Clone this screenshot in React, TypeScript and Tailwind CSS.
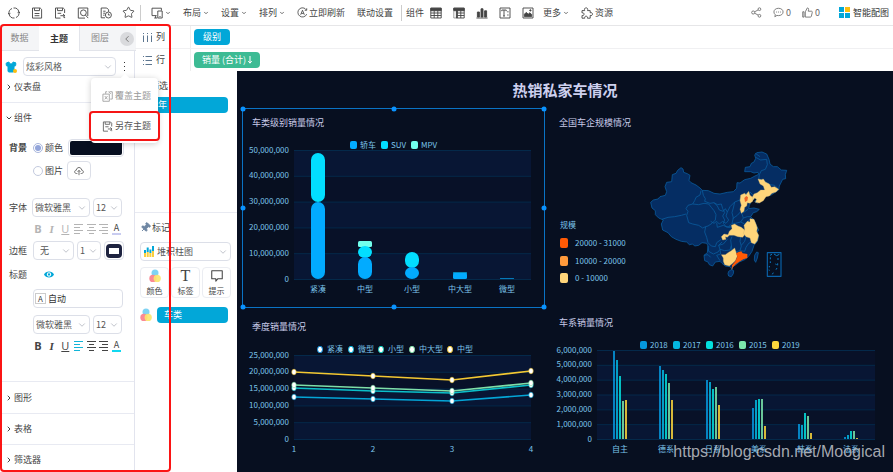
import React from 'react';
import { ChevronDown, ChevronLeft, ChevronRight, Pin, Shirt, Star } from 'lucide-react';

/* ---------- Icons ---------- */

interface IconProps {
  className?: string;
  children: React.ReactNode;
}

const Icon: React.FC<IconProps> = ({ className = 'size-3', children }) => (
  <svg
    viewBox="0 0 12 12"
    className={`shrink-0 ${className}`}
    fill="none"
    stroke="currentColor"
    strokeWidth="0.9"
    strokeLinejoin="round"
    aria-hidden="true"
  >
    {children}
  </svg>
);

const RefreshIcon = () => (
  <Icon>
    <path d="M1.1 7.200A5 5 0 0 1 4 1.500M5.500 1A5 5 0 0 1 10.900 4.800M10.900 5A5 5 0 0 1 8 10.500M6.500 11A5 5 0 0 1 1.100 7.200" />
    <path d="M.2 6l.9 1.300 1.300-.9M11.800 6l-.9-1.300-1.300.9" />
  </Icon>
);

const SaveIcon = () => (
  <Icon>
    <path d="M1.5 1h7.7L10.6 2.4V11.1H1.5z" />
    <path d="M3.5 1.2v2.4h5V1.2M3.6 6.5h4.8M3.6 8.7h4.8" />
  </Icon>
);

const SaveAsIcon = ({ className }: { className?: string }) => (
  <Icon className={className}>
    <path d="M6.500 11.100H1.500V1h7.700l1.400 1.400V6" />
    <path d="M3.500 1.200v2.400h5V1.200M3.600 6.300h3.600M6.400 8.700h4.400M9 7l1.900 1.700L9 10.400M10.600 10v1.100" />
  </Icon>
);

const PreviewIcon = () => (
  <Icon>
    <path d="M8 11.100H1.300V1h9.500v8" />
    <circle cx="6.400" cy="5.800" r="2.900" />
    <path d="M8.400 8l2.800 3.100" />
  </Icon>
);

const ScheduleIcon = () => (
  <Icon>
    <path d="M5 10.800H1.200V1h5.600l1.800 1.800v2M3.200 4.200h2.400M3.200 6.200h2M3.200 8.200h1.400" />
    <circle cx="8.400" cy="8" r="3" />
    <path d="M8.400 6.400V8h1.500" />
  </Icon>
);

const DeviceIcon = () => (
  <Icon>
    <path d="M5.600 8.600H1V1.200h9.400v2.400M3.200 11h3M4.600 8.800V11" />
    <path d="M6.800 4h4.400v7H6.800zM8.400 9.600h1.200" />
  </Icon>
);

const AutoRefreshIcon = () => (
  <Icon className="size-[11px]">
    <path d="M10.600 7.800A5 5 0 1 1 10.200 3.200M10.600 1.400v2.200H8.400" />
    <path d="M4 8.500L6 3.500l2 5M4.700 7h2.600" />
  </Icon>
);

const TableIcon = () => (
  <Icon>
    <path d="M.8 1.200h10.400v9.800H.8zM.8 6h10.400M.8 8.500h10.400M4.200 3.400V11M7.800 3.400V11" />
    <path d="M.8 1.200h10.400v2.500H.8z" fill="currentColor" />
  </Icon>
);

const PivotIcon = () => (
  <Icon>
    <path d="M.8 3.500V1.200h10.400v9.800H4.200M4.200 6h7M4.200 8.500h7M7.800 3.400V11" />
    <path d="M.8 1.200h10.400v2.500H.8zM3.400 3.500h1V11h-1z" fill="currentColor" />
    <path d="M.8 4v7h3" strokeWidth="0.500" />
  </Icon>
);

const BarsIcon = () => (
  <Icon>
    <path d="M1.400 5h2v5h-2zM5 1.800h2v8.200H5zM8.600 3.800h2V10h-2z" fill="currentColor" />
    <path d="M.4 11h11.200" />
  </Icon>
);

const TextIcon = () => (
  <Icon>
    <path d="M1 1h10v10H1zM2.800 4.200V3h4.400v1.200M5 3v6M4 9h2M8.200 4.800h1.400M8.200 8h1.400" />
  </Icon>
);

const ImageIcon = () => (
  <Icon>
    <path d="M1 1h10v10H1z" />
    <path d="M2.400 9.600V7.200l1.800-1.800 2 1.800 1.600-1.400 1.800 1.600v2.200z" fill="currentColor" />
    <circle cx="8.400" cy="3.400" r=".7" fill="currentColor" />
  </Icon>
);

const PuzzleIcon = () => (
  <Icon>
    <path d="M1 3.600h2.700C3 2 3.900.8 5.100.8S7.200 2 6.500 3.600h2.700v2.200c1.300-.6 2.300.2 2.300 1.300S10.500 9 9.200 8.400v2.800H6.400c.4-1.300-.3-2-1.300-2s-1.700.7-1.300 2H1V8.500c1.300.4 2-.3 2-1.300S2.300 5.500 1 5.900z" />
  </Icon>
);

const ShareIcon = () => (
  <Icon className="size-[11px]">
    <circle cx="2.400" cy="6" r="1.700" />
    <circle cx="9.200" cy="2.400" r="1.500" />
    <circle cx="9.200" cy="9.600" r="1.500" />
    <path d="M4 5.200l3.800-2M4 6.800l3.800 2" />
  </Icon>
);

const CommentIcon = () => (
  <Icon className="size-[11px]">
    <path d="M6 1.400c2.900 0 5 1.700 5 4s-2.100 4-5 4c-.6 0-1.200 0-1.700-.2L2 10.600l.5-2.200C1.500 7.600 1 6.600 1 5.400c0-2.300 2.100-4 5-4z" />
    <path d="M3.400 5.500h1M5.500 5.500h1M7.600 5.500h1" />
  </Icon>
);

const LikeIcon = () => (
  <Icon className="size-[11px]">
    <path d="M3.600 5.200L5.800 1c1.200 0 1.600.8 1.400 1.800L6.800 4.600h3.600c.7 0 .9.600.8 1.200l-1 4.400c-.1.500-.5.800-1 .8H3.600zM.8 5.200h1.400V11H.8z" />
  </Icon>
);

const ColorDots = ({ className }: { className: string }) => (
  <svg viewBox="0 0 12 14" className={`shrink-0 ${className}`} aria-hidden="true">
    <circle cx="6" cy="4" r="3.500" fill="#7fd3f3" />
    <circle cx="3.900" cy="9.400" r="3.600" fill="#fb8a94" />
    <circle cx="8.200" cy="9.400" r="3.600" fill="#fbe66c" fillOpacity="0.9" />
  </svg>
);

const ListIcon = ({ vertical = false }: { vertical?: boolean }) => (
  <svg viewBox="0 0 9 9" className="size-[9px] shrink-0" stroke="#5d7690" aria-hidden="true">
    {vertical ? (
      <path d="M.5 0v1M.5 2.500V9M4.500 0v1M4.500 2.500V9M8.500 0v1M8.500 2.500V9" />
    ) : (
      <path d="M0 .5h1M2.500 .5H9M0 4.500h1M2.500 4.500H9M0 8.500h1M2.500 8.500H9" />
    )}
  </svg>
);

const AlignIcon = ({ kind }: { kind: 'left' | 'center' | 'right' }) => (
  <svg viewBox="0 0 9 10" className="h-2.5 w-[9px]" stroke="currentColor" aria-hidden="true">
    {kind === 'left' && <path d="M0 .5h9M0 3.500h6M0 6.500h9M0 9.500h6" />}
    {kind === 'center' && <path d="M0 .5h9M2 3.500h5M0 6.500h9M2 9.500h5" />}
    {kind === 'right' && <path d="M0 .5h9M3 3.500h6M0 6.500h9M3 9.500h6" />}
  </svg>
);

/* ---------- Toolbar ---------- */

const FILE_ACTIONS = [
  { label: 'Refresh', icon: <RefreshIcon /> },
  { label: 'Save', icon: <SaveIcon /> },
  { label: 'Save as', icon: <SaveAsIcon /> },
  { label: 'Preview', icon: <PreviewIcon /> },
  { label: 'Schedule', icon: <ScheduleIcon /> },
  { label: 'Favorite', icon: <Star className="size-[13px]" strokeWidth={1.6} /> },
];

const COMPONENT_ACTIONS = [
  { label: 'Table', icon: <TableIcon /> },
  { label: 'Pivot table', icon: <PivotIcon /> },
  { label: 'Chart', icon: <BarsIcon /> },
  { label: 'Text', icon: <TextIcon /> },
  { label: 'Image', icon: <ImageIcon /> },
];

const MenuButton = ({ children }: { children: React.ReactNode }) => (
  <button className="flex items-center gap-0.5">
    {children}
    <ChevronDown className="size-1.5" strokeWidth={3} />
  </button>
);

const IconButton = ({ label, icon }: { label: string; icon: React.ReactNode }) => (
  <button aria-label={label} className="flex w-[23px] shrink-0 justify-center">
    {icon}
  </button>
);

const Toolbar = () => (
  <header className="flex h-[26px] items-center border-b border-[#e6e6e8] pr-1 pl-0.5 whitespace-nowrap text-[#444]">
    {FILE_ACTIONS.map((a) => (
      <IconButton key={a.label} {...a} />
    ))}
    <span className="h-4 w-px bg-[#ccc]" />
    <nav className="mx-2 flex items-center gap-3 pl-0.5">
      <MenuButton>
        <DeviceIcon />
      </MenuButton>
      <MenuButton>布局</MenuButton>
      <MenuButton>设置</MenuButton>
      <MenuButton>排列</MenuButton>
      <button className="flex items-center gap-px">
        <AutoRefreshIcon />
        立即刷新
      </button>
      <button>联动设置</button>
    </nav>
    <span className="h-4 w-px bg-[#ccc]" />
    <span className="ml-1">组件</span>
    {COMPONENT_ACTIONS.map((a) => (
      <IconButton key={a.label} {...a} />
    ))}
    <div className="ml-1 flex items-center gap-3">
      <MenuButton>更多</MenuButton>
      <button className="flex items-center gap-0.5">
        <PuzzleIcon />
        资源
      </button>
    </div>
    <div className="ml-auto flex items-center gap-[11px] text-[#666]">
      <button aria-label="Share">
        <ShareIcon />
      </button>
      <button className="flex items-center gap-0.5">
        <CommentIcon />0
      </button>
      <button className="flex items-center gap-0.5">
        <LikeIcon />0
      </button>
      <button className="ml-2 flex items-center gap-[3px] text-[#333]">
        <span className="grid size-[11px] grid-cols-2 gap-px">
          <i className="bg-[#02a7d8]" />
          <i className="bg-[#fcbf10]" />
          <i className="bg-[#02a7d8]" />
          <i className="bg-[#02a7d8]" />
        </span>
        智能配图
      </button>
    </div>
  </header>
);

/* ---------- Sidebar ---------- */

interface SelectProps {
  label: string;
  value: string;
  className: string;
  pad?: string;
}

const Select: React.FC<SelectProps> = ({ label, value, className, pad = 'pl-1' }) => (
  <div className={`relative h-[19px] rounded-sm border border-[#dcdfe8] bg-white ${className}`}>
    <select aria-label={label} className={`block h-full w-full appearance-none text-[#555] ${pad}`}>
      <option>{value}</option>
    </select>
    <ChevronDown className="pointer-events-none absolute top-1 right-0.5 size-2.5 text-[#b5b8c0]" />
  </div>
);

const FormatBar = ({ disabled = false }: { disabled?: boolean }) => (
  <div
    className={`ml-[33px] flex h-6 w-[88px] items-center justify-between text-[11px] ${
      disabled ? 'text-[#b4b4b4]' : 'text-[#444]'
    }`}
  >
    <button className="w-2.5 font-['Open_Sans',sans-serif] font-bold">B</button>
    <button className="w-2.5 font-['Liberation_Serif',serif] font-bold italic">I</button>
    <button className="w-2.5 font-['Open_Sans',sans-serif] underline">U</button>
    <button aria-label="Align left" className={disabled ? '' : 'text-[#12b5d8]'}>
      <AlignIcon kind="left" />
    </button>
    <button aria-label="Align center">
      <AlignIcon kind="center" />
    </button>
    <button aria-label="Align right">
      <AlignIcon kind="right" />
    </button>
    <button
      className={`h-3 w-[9px] border-b-2 text-[9px] leading-[10px] text-[#444] ${
        disabled ? 'border-[#c9ccf0]' : 'border-[#12d8f0]'
      }`}
    >
      A
    </button>
  </div>
);

const Collapsed = ({ title, className }: { title: string; className: string }) => (
  <button className={`flex w-full items-center gap-px pl-[5px] ${className}`}>
    <ChevronRight className="size-2" strokeWidth={3} />
    {title}
  </button>
);

const ThemeMenu = () => (
  <div className="absolute top-[21px] left-[91px] z-20 w-[67px] rounded-sm bg-white pt-[3px] pb-0.5 shadow-[0_1px_6px_rgba(0,0,0,0.2)]">
    <span className="absolute -top-[3px] left-[31px] size-1.5 rotate-45 bg-white" />
    <button className="flex h-[30px] w-full items-center gap-0.5 pl-[11px] text-[#999]">
      <Icon className="size-[11px]">
        <path d="M4 3V.8h1.600M8 .8h3.200v8H9M1 3.400h7v7.800H1zM3 5.500l3 3.600M6 5.500L3 9.100M9.600 3L7 .8" />
      </Icon>
      覆盖主题
    </button>
    <button className="relative flex h-[30px] w-full items-center gap-0.5 pl-[11px] text-[#555]">
      <span className="absolute inset-y-0 -right-0.5 -left-0.5 rounded-sm border-2 border-[#f51515]" />
      <SaveAsIcon className="size-[11px]" />
      另存主题
    </button>
  </div>
);

const Sidebar = () => (
  <aside className="w-[135px] shrink-0 border-r border-[#e2e4ee] text-[#444]">
    <div className="flex h-[25px] text-[#888]">
      <button className="w-[39px] border-b border-[#e2e4ea] bg-[#f4f5f7]">数据</button>
      <button className="w-10 font-bold text-[#333]">主题</button>
      <button className="flex-1 border-b border-l border-[#e2e4ea] bg-[#f4f5f7] pr-4">图层</button>
      <button
        aria-label="Collapse"
        className="-ml-4 flex size-[14px] items-center justify-center self-center rounded-full bg-[#d9dadd] text-[#666]"
      >
        <ChevronLeft className="size-2.5" />
      </button>
    </div>

    <div className="relative mt-1.5 flex items-center">
      <div className="relative ml-[5px] w-[18px]">
        <Shirt className="size-3 fill-[#02a7d8] text-[#02a7d8]" />
        <span className="absolute right-1.5 bottom-0 size-1 rounded-full bg-[#fcbf10]" />
      </div>
      <Select label="主题" value="炫彩风格" className="w-[93px]" pad="pl-0.5" />
      <button aria-label="More" className="ml-2 flex flex-col gap-[3px]">
        <i className="size-px bg-[#333]" />
        <i className="size-px bg-[#333]" />
        <i className="size-px bg-[#333]" />
      </button>
      <ThemeMenu />
    </div>

    <Collapsed title="仪表盘" className="h-[27px] border-b border-[#e8eaf2] pb-1" />
    <button className="flex h-[30px] items-center gap-px pl-[5px]">
      <ChevronDown className="size-2" strokeWidth={3} />
      组件
    </button>

    <div className="border-b border-[#e8eaf2] pt-1.5 pb-[23px]">
      <div className="flex h-[18px] items-center pl-[9px]">
        <span className="w-6 font-bold">背景</span>
        <label className="flex w-[35px] items-center gap-0.5">
          <input
            type="radio"
            name="background"
            defaultChecked
            className="size-2.5 appearance-none rounded-full border border-[#a9b6dc] bg-white p-px checked:bg-[#93a5da] checked:bg-clip-content"
          />
          颜色
        </label>
        <button
          aria-label="背景颜色"
          className="h-[18px] w-14 rounded-sm border border-[#dcdfe8] bg-[#070f20] bg-clip-content p-px"
        />
      </div>
      <div className="mt-1 flex h-[19px] items-center pl-[33px]">
        <label className="flex w-[34px] items-center gap-0.5">
          <input
            type="radio"
            name="background"
            className="size-2.5 appearance-none rounded-full border border-[#c3cade] bg-white"
          />
          图片
        </label>
        <button
          aria-label="上传图片"
          className="flex h-[19px] w-6 items-center justify-center rounded-sm border border-[#dcdfe8]"
        >
          <Icon className="size-2.5">
            <path d="M4 9H3C1.500 9 .8 8 .8 7c0-1.200.9-2 2-2 .2-2 1.500-3.200 3.200-3.200S9 3 9.200 5c1.200 0 2 .9 2 2s-.8 2-2.200 2H8M6 11V5.500M4.300 7L6 5.200 7.700 7" />
          </Icon>
        </button>
      </div>

      <div className="mt-[18px] flex items-center pl-[9px]">
        <span className="w-[23px]">字体</span>
        <Select label="字体" value="微软雅黑" className="w-[58px]" pad="pl-0.5" />
        <Select label="字号" value="12" className="ml-[3px] w-[29px]" pad="pl-0.5" />
      </div>
      <FormatBar disabled />

      <div className="flex items-center pl-[9px]">
        <span className="w-6">边框</span>
        <Select label="边框" value="无" className="w-[41px]" pad="pl-1.5" />
        <Select label="边框宽度" value="1" className="ml-[3px] w-6" pad="pl-0.5" />
        <button
          aria-label="边框颜色"
          className="ml-[3px] flex h-[19px] w-5 items-center justify-center rounded-sm border border-[#dcdfe8]"
        >
          <span className="h-3.5 w-4 rounded-sm border-4 border-x-[3px] border-[#1e2340] bg-white" />
        </button>
      </div>

      <div className="flex h-[29px] items-center pl-[9px]">
        <span className="w-[35px]">标题</span>
        <button aria-label="显示标题">
          <svg viewBox="0 0 12 8" className="h-[7px] w-2.5" aria-hidden="true">
            <path d="M0 4C2-.8 10-.8 12 4 10 8.800 2 8.800 0 4z" fill="#02a7d8" />
            <circle cx="6" cy="4" r="2.600" fill="#fff" />
            <circle cx="6" cy="4" r="1.400" fill="#02a7d8" />
          </svg>
        </button>
      </div>

      <label className="ml-[33px] flex h-[19px] w-[90px] items-center gap-0.5 rounded-sm border border-[#dcdfe8] pl-px">
        <span className="flex size-[11px] items-center justify-center border border-[#ccc] text-[8px]">A</span>
        <input aria-label="标题" defaultValue="自动" className="w-[70px] min-w-0 text-[#333] outline-none" />
      </label>

      <div className="mt-[7px] flex pl-[33px]">
        <Select label="标题字体" value="微软雅黑" className="w-[57px]" pad="pl-0.5" />
        <Select label="标题字号" value="12" className="ml-[3px] w-[29px]" pad="pl-0.5" />
      </div>
      <FormatBar />
    </div>

    <Collapsed title="图形" className="h-8 border-b border-[#e8eaf2]" />
    <Collapsed title="表格" className="h-[31px] border-b border-[#e8eaf2]" />
    <Collapsed title="筛选器" className="h-[26px] pt-1" />
  </aside>
);

/* ---------- Shelves and marks ---------- */

const Shelves = () => (
  <div className="text-[#444]">
    <div className="flex h-[23px] items-center gap-1 border-b border-[#f0f0f2] pl-2">
      <ListIcon vertical />
      <span className="w-[34px]">列</span>
      <span className="-ml-1 flex h-full items-center border-l border-[#eee] pl-[3px]">
        <button className="h-4 w-9 rounded-sm bg-[#02a7d8] text-white">级别</button>
      </span>
    </div>
    <div className="flex h-[22px] items-center gap-1 pl-2">
      <ListIcon />
      <span className="w-[34px]">行</span>
      <span className="-ml-1 flex h-full items-center border-l border-[#eee] pl-[3px]">
        <button className="flex h-4 w-[66px] items-center justify-center gap-0.5 rounded-sm bg-[#3dbb94] text-white">
          销量 (合计)
          <svg viewBox="0 0 4 8" className="h-2 w-1" fill="none" stroke="currentColor" aria-hidden="true">
            <path d="M2 0v7M.3 5L2 7.200 3.700 5" />
          </svg>
        </button>
      </span>
    </div>
  </div>
);

const MARK_BUTTONS = [
  { label: '颜色', icon: <ColorDots className="h-3.5 w-3" /> },
  {
    label: '标签',
    icon: <span className="font-['Liberation_Serif',serif] text-base leading-[14px] text-[#444]">T</span>,
  },
  {
    label: '提示',
    icon: (
      <Icon className="size-3.5">
        <path d="M1.500 1.500h9v6.800H6.800L5 10.400V8.300H1.500z" />
      </Icon>
    ),
  },
];

const MarksPanel = () => (
  <div className="w-[102px] shrink-0 text-[#444]">
    <section className="h-[142px] border-b border-[#e8eaf2]">
      <h3 className="flex h-[26px] items-center pt-1 pl-[15px]">筛选</h3>
      <button className="ml-[5px] h-4 w-[88px] rounded-sm bg-[#02a7d8] pl-[18px] text-left text-white">年</button>
    </section>
    <section className="pl-[5px]">
      <h3 className="flex h-[29px] items-center gap-px">
        <Pin className="size-[11px] rotate-45 fill-[#6f87a3] text-[#6f87a3]" />
        标记
      </h3>
      <div className="relative w-[91px]">
        <Select label="标记类型" value="堆积柱图" className="w-[91px]" pad="pl-4" />
        <svg viewBox="0 0 10 11" className="pointer-events-none absolute top-1 left-1 h-[11px] w-2.5" aria-hidden="true">
          <path d="M0 7h2v4H0zM2.700 6h2v5h-2zM5.400 7h2v4h-2zM8 5h2v6H8z" fill="#f9cf3e" />
          <path d="M0 4h2v3H0zM2.700 1.500h2V6h-2zM5.400 3.500h2V7h-2zM8 0h2v5H8z" fill="#02a7d8" />
        </svg>
      </div>
      <div className="mt-1.5 flex gap-0.5">
        {MARK_BUTTONS.map((b) => (
          <button
            key={b.label}
            className="flex h-[31px] w-[29px] flex-col items-center justify-center gap-[3px] rounded-sm border border-[#ebedf2] text-[8px] leading-[10px]"
          >
            {b.icon}
            {b.label}
          </button>
        ))}
      </div>
      <div className="mt-[9px] flex items-center gap-[5px]">
        <ColorDots className="h-3.5 w-3" />
        <button className="h-4 w-[71px] rounded-sm bg-[#02a7d8] pl-[7px] text-left text-white">车类</button>
      </div>
    </section>
  </div>
);

/* ---------- Charts ---------- */

const AXIS = '#7cc4ea';
const GRID = '#04294a';

interface GridProps {
  x1: number;
  x2: number;
  top: number;
  bottom: number;
  labels: string[];
  firstBand?: number;
}

// Horizontal split lines with alternating bands, labels go from top to bottom
const Grid: React.FC<GridProps> = ({ x1, x2, top, bottom, labels, firstBand = 0 }) => {
  const step = (bottom - top) / (labels.length - 1);
  return (
    <g>
      {labels.slice(1).map((_, i) => (
        <rect
          key={i}
          x={x1}
          y={top + step * i}
          width={x2 - x1}
          height={step}
          fill={i % 2 === firstBand ? '#081634' : '#081128'}
        />
      ))}
      {labels.map((label, i) => (
        <g key={label}>
          <line x1={x1} x2={x2} y1={top + step * i} y2={top + step * i} stroke={GRID} />
          <text x={x1 - 5} y={top + step * i + 2} textAnchor="end" fill={AXIS}>
            {label}
          </text>
        </g>
      ))}
    </g>
  );
};

const STACKS = [
  { name: '紧凑', x: 318, parts: [[153, 202, '#02deff'], [202, 279, '#02abff']] },
  { name: '中型', x: 365, parts: [[241, 247, '#72ffec'], [246, 258, '#02deff'], [257, 279, '#02abff']] },
  { name: '小型', x: 412, parts: [[252, 268, '#02deff'], [267, 279, '#02abff']] },
  { name: '中大型', x: 460, parts: [[272, 274, '#0588b8'], [273, 279, '#02abff']] },
  { name: '微型', x: 507, parts: [[278, 279, '#0578b8']] },
] as { name: string; x: number; parts: [number, number, string][] }[];

const StackedChart = () => (
  <svg viewBox="242 132 303 176" className="block w-full text-[8px]">
    {[
      { x: 350, name: '轿车', color: '#02abff' },
      { x: 381, name: 'SUV', color: '#02deff' },
      { x: 411, name: 'MPV', color: '#72ffec' },
    ].map((l) => (
      <g key={l.name}>
        <rect x={l.x} y={141} width={7} height={8} rx={2} fill={l.color} />
        <text x={l.x + 10} y={148} fill={AXIS}>
          {l.name}
        </text>
      </g>
    ))}
    <Grid
      x1={294}
      x2={531}
      top={150.5}
      bottom={279.5}
      labels={['50,000,000', '40,000,000', '30,000,000', '20,000,000', '10,000,000', '0']}
    />
    {STACKS.map((s) => (
      <g key={s.name}>
        {s.parts.map(([y1, y2, color]) => (
          <rect
            key={y1}
            x={s.x - 7}
            y={y1}
            width={14}
            height={y2 - y1}
            rx={y2 - y1 > 10 ? 7 : Math.min(2, (y2 - y1) / 4)}
            fill={color}
          />
        ))}
        <text x={s.x} y={292} textAnchor="middle" fill={AXIS}>
          {s.name}
        </text>
      </g>
    ))}
  </svg>
);

const LINE_X = [294, 373, 452, 531];
const LINES = [
  { color: '#04a5d6', ys: [397, 399, 401, 395] },
  { color: '#0bbfc9', ys: [388, 391, 393, 385] },
  { color: '#7fdfa8', ys: [385, 388, 391, 383] },
  { color: '#f3c832', ys: [372, 376, 380, 371] },
];

const LineChart = () => (
  <svg viewBox="242 336 303 132" className="block w-full text-[8px]">
    {[
      { x: 320, name: '紧凑', color: '#0a8fe0' },
      { x: 351, name: '微型', color: '#04b5e0' },
      { x: 381, name: '小型', color: '#0bcfc0' },
      { x: 412, name: '中大型', color: '#7fdfa8' },
      { x: 450, name: '中型', color: '#f3c832' },
    ].map((l) => (
      <g key={l.name}>
        <ellipse cx={l.x} cy={349.5} rx={2.5} ry={3.2} fill="#fff" stroke={l.color} />
        <text x={l.x + 7} y={352} fill={AXIS}>
          {l.name}
        </text>
      </g>
    ))}
    <Grid
      x1={294}
      x2={531}
      top={355.5}
      bottom={439.5}
      labels={['25,000,000', '20,000,000', '15,000,000', '10,000,000', '5,000,000', '0']}
    />
    {LINES.map((line) => (
      <g key={line.color} stroke={line.color}>
        <polyline points={LINE_X.map((x, i) => `${x},${line.ys[i]}`).join(' ')} fill="none" strokeWidth={1.6} />
        {LINE_X.map((x, i) => (
          <ellipse key={x} cx={x} cy={line.ys[i]} rx={2.2} ry={2.8} fill="#fff" strokeWidth={0.6} />
        ))}
      </g>
    ))}
    {LINE_X.map((x, i) => (
      <text key={x} x={x} y={452} textAnchor="middle" fill={AXIS}>
        {i + 1}
      </text>
    ))}
  </svg>
);

const YEARS = [
  { name: '2018', color: '#0597dc' },
  { name: '2017', color: '#04b7e0' },
  { name: '2016', color: '#03dfdd' },
  { name: '2015', color: '#7be6ac' },
  { name: '2019', color: '#fbd63c' },
];

const BRANDS = [
  { name: '自主', x: 613, tops: [351, 360, 376, 401, 400] },
  { name: '德系', x: 659, tops: [366, 370, 374, 383, 400] },
  { name: '日系', x: 706, tops: [380, 382, 389, 387, 405] },
  { name: '美系', x: 752, tops: [408, 400, 399, 399, 426] },
  { name: '韩系', x: 798, tops: [424, 425, 413, 416, 433] },
  { name: '法系', x: 844, tops: [437, 435, 431, 431, 438] },
];

const BrandChart = () => (
  <svg viewBox="549 332 344 138" className="block w-full text-[8px]">
    {YEARS.map((l, i) => (
      <g key={l.name}>
        <rect x={640 + i * 33} y={341} width={7} height={8} rx={2} fill={l.color} />
        <text x={650 + i * 33} y={348} fill={AXIS}>
          {l.name}
        </text>
      </g>
    ))}
    <Grid
      x1={597}
      x2={875}
      top={350.5}
      bottom={439.5}
      firstBand={1}
      labels={['6,000,000', '5,000,000', '4,000,000', '3,000,000', '2,000,000', '1,000,000', '0']}
    />
    {BRANDS.map((b) => (
      <g key={b.name}>
        {b.tops.map((y, i) => (
          <rect key={i} x={b.x + i * 3} y={y} width={2} height={439 - y} fill={YEARS[i].color} fillOpacity={0.85} />
        ))}
        <text x={b.x + 7} y={452} textAnchor="middle" fill={AXIS}>
          {b.name}
        </text>
      </g>
    ))}
  </svg>
);

const CHINA =
  'M32 187L40 180 54 177 60 170 76 166 80 155 75 140 80 127 95 125 97 104 108 100 113 91 123 83 129 87 131 97 142 101 150 106 147 121 153 128 168 135 180 144 187 151 205 152 222 160 240 162 262 157 280 155 290 145 291 128 300 129 314 119 332 115 345 108 356 103 354 97 342 99 332 95 314 95 316 82 330 80 334 70 342 66 347 55 344 45 350 38 366 36 380 42 387 58 390 72 400 80 412 80 424 90 440 91 436 104 437 116 428 118 418 138 416 150 404 158 392 166 376 168 366 182 352 189 344 185 352 176 346 174 334 184 328 196 326 206 342 204 358 208 350 215 340 218 332 230 342 240 348 254 356 270 350 278 356 288 352 304 342 316 336 334 328 346 316 358 298 366 288 374 278 380 276 388 270 380 256 378 246 370 240 364 226 366 218 378 208 374 204 366 194 362 192 346 202 338 204 318 200 310 186 308 176 316 164 318 158 312 148 314 140 306 124 304 108 298 94 290 84 278 68 270 64 252 70 240 56 234 46 224 46 212 36 204z';

const PROVINCES = [
  // west
  'M66 238L84 232 104 230 124 226 138 222M183 152L180 165 168 172 164 182 158 192 144 196 138 206 144 214 140 226 146 248 158 252 176 256 188 264 197 260',
  'M187 151L190 166 196 176 194 184 210 190 222 188 232 198 238 210 250 214 256 206 262 216 258 228 266 240 258 250 248 244 238 252 230 244 222 250 212 244',
  'M158 192L176 194 192 190 206 192 214 202 222 212 228 224 226 240 216 250 204 258 197 260M197 260L194 276 200 292 204 308 214 318 226 320 230 308 244 298',
  // north and centre
  'M222 188L232 194 244 192 248 206M262 216L270 200 284 186 300 180 312 164M284 186L280 204 276 218 280 234 276 250 268 258M302 215L292 226 278 236M304 216L310 234 302 246 286 250 276 250',
  'M248 206L254 218 248 228 254 240 250 250 258 260 274 260M302 246L314 252 332 236M310 218L324 208M310 234L322 230 332 230',
  // south
  'M230 248L232 262 250 256 262 262 272 262M204 318L206 334 220 342 234 336 240 328 236 316 246 306M236 316L250 312 262 298M240 328L254 332 270 330 274 316 272 300 276 290',
  'M274 316L276 332 286 336 300 332 304 318 300 304 302 290M300 332L314 334 318 322 326 310 334 306M318 290L314 304 304 316M192 346L204 344 212 352M240 328L242 342 230 346 240 362',
  // north-east
  'M347 52L362 60 380 58 382 74 376 88 364 92 358 104 356 118M360 118L376 126 390 134 404 136 416 148M314 164L330 156 338 164M346 40L360 50',
];

const ChinaMap = () => (
  <svg viewBox="549 132 344 176" className="block w-full text-[8px]">
    <text x={560} y={228} fill={AXIS}>
      规模
    </text>
    {[
      { y: 238, name: '20000 - 31000', color: '#ff5a05' },
      { y: 256, name: '10000 - 20000', color: '#ff9a3c' },
      { y: 273, name: '0 - 10000', color: '#ffd57a' },
    ].map((l) => (
      <g key={l.name}>
        <rect x={560} y={l.y} width={8} height={10} rx={2} fill={l.color} />
        <text x={575} y={l.y + 8} fill={AXIS}>
          {l.name}
        </text>
      </g>
    ))}
    <svg x={640} y={140} width={170} height={145} viewBox="0 0 510 435" strokeWidth={2.4} strokeLinejoin="round">
      <path d={CHINA} fill="#052d63" stroke="#0a5c9e" />
      <path d={PROVINCES.join('')} fill="none" stroke="#0a5c9e" />
      <g fill="#ffd57a" stroke="#c9ad72" strokeWidth={1}>
        {/* Jilin, Liaoning */}
        <path d="M354 117L364 119 370 117 376 126 388 132 394 142 404 140 416 148 408 156 396 160 388 168 378 170 370 182 358 189 346 187 350 178 344 174 336 184 334 176 342 162 352 158 362 150 374 150 370 138 360 132z" />
        {/* Hebei */}
        <path d="M302 165L314 160 318 164 326 154 330 166 338 172 338 184 330 190 322 188 320 198 314 202 312 214 304 220 300 208 304 196 300 182z" />
        {/* Hubei, Chongqing */}
        <path d="M244 290L252 282 264 284 268 274 276 266 274 256 284 252 294 258 304 262 314 270 314 284 308 292 294 290 282 286 268 286 262 292 256 290 258 298 248 300z" />
        {/* Anhui, Jiangsu, Zhejiang */}
        <path d="M312 256L322 244 330 246 330 236 342 238 348 252 352 264 350 274 356 286 352 302 344 312 334 308 330 294 318 290 310 280 314 268z" />
        {/* Guangxi */}
        <path d="M244 344L256 344 264 338 274 332 284 324 288 336 292 348 286 362 278 370 268 378 254 374 250 364 250 354z" />
      </g>
      <path d="M288 340L296 336 304 334 308 340 322 342 322 354 310 358 300 364 288 372 280 380 276 386 276 376 286 364 292 350z" fill="#ff5a05" />
      <path d="M313 174L319 168 324 172 322 182 315 186z" fill="#f0672a" />
      <path d="M277 380L275 390" stroke="#a85a30" />
      <path d="M266 394L274 389 281 392 280 401 274 410 266 408 264 401z" fill="#052d63" stroke="#0a5c9e" />
      <path d="M350 336L355 338 352 354 347 367 343 360 344 346z" fill="#052d63" stroke="#0a5c9e" />
      <rect x={382} y={338} width={41} height={71} fill="none" stroke="#0a62a8" strokeWidth={3.5} />
      <path
        d="M390 346l6-3M402 342l8 5 8-4M391 352v6M391 364v5M388 378v4M414 354v6M413 370v6M411 384l-3 5M400 398l-3 5M406 372l4 2M386 390l3 1"
        stroke="#0a78c2"
        strokeWidth={3}
        fill="none"
      />
    </svg>
  </svg>
);

/* ---------- Dashboard ---------- */

const HANDLES = [
  'left-0 top-0',
  'left-1/2 top-0',
  'left-full top-0',
  'left-0 top-1/2',
  'left-full top-1/2',
  'left-0 top-full',
  'left-1/2 top-full',
  'left-full top-full',
];

interface CardProps {
  title: string;
  selected?: boolean;
  className?: string;
  children: React.ReactNode;
}

const Card: React.FC<CardProps> = ({ title, selected, className = '', children }) => (
  <section className={`relative ${className}`}>
    <h3 className="flex h-6 items-center pt-1.5 pl-2.5 text-[#c9cbe9]">{title}</h3>
    {children}
    {selected && (
      <div className="pointer-events-none absolute inset-0 border border-[#0a73c4]">
        {HANDLES.map((h) => (
          <span key={h} className={`absolute size-[5px] -translate-1/2 rounded-full bg-[#0a93ff] ${h}`} />
        ))}
      </div>
    )}
  </section>
);

const Dashboard = () => (
  <main className="relative min-w-0 flex-1 bg-[#070f20]">
    <h1 className="flex h-[37px] items-center justify-center text-[15px] font-bold text-[#cdd0ee]">热销私家车情况</h1>
    <div className="grid grid-cols-[303fr_344fr] gap-1 pl-[5px]">
      <div>
        <Card title="车类级别销量情况" selected>
          <StackedChart />
        </Card>
        <Card title="季度销量情况" className="mt-1">
          <LineChart />
        </Card>
      </div>
      <div>
        <Card title="全国车企规模情况">
          <ChinaMap />
        </Card>
        <Card title="车系销量情况">
          <BrandChart />
        </Card>
      </div>
    </div>
    <p className="absolute right-2 bottom-2 font-['Liberation_Sans',sans-serif] text-base text-[#b9bcc2]/90">
      https://blog.csdn.net/Moogical
    </p>
  </main>
);

export default function App() {
  return (
    <div className="flex min-h-screen flex-col bg-white font-['Noto_Sans_CJK_SC',sans-serif] text-[9px] leading-3">
      <Toolbar />
      <div className="relative flex flex-1">
        <Sidebar />
        <div className="flex min-w-0 flex-1 flex-col">
          <Shelves />
          <div className="flex flex-1">
            <MarksPanel />
            <Dashboard />
          </div>
        </div>
        <div className="pointer-events-none absolute -top-0.5 bottom-0 left-0 z-10 w-[171px] rounded-sm border-2 border-[#fb1414]" />
      </div>
    </div>
  );
}
